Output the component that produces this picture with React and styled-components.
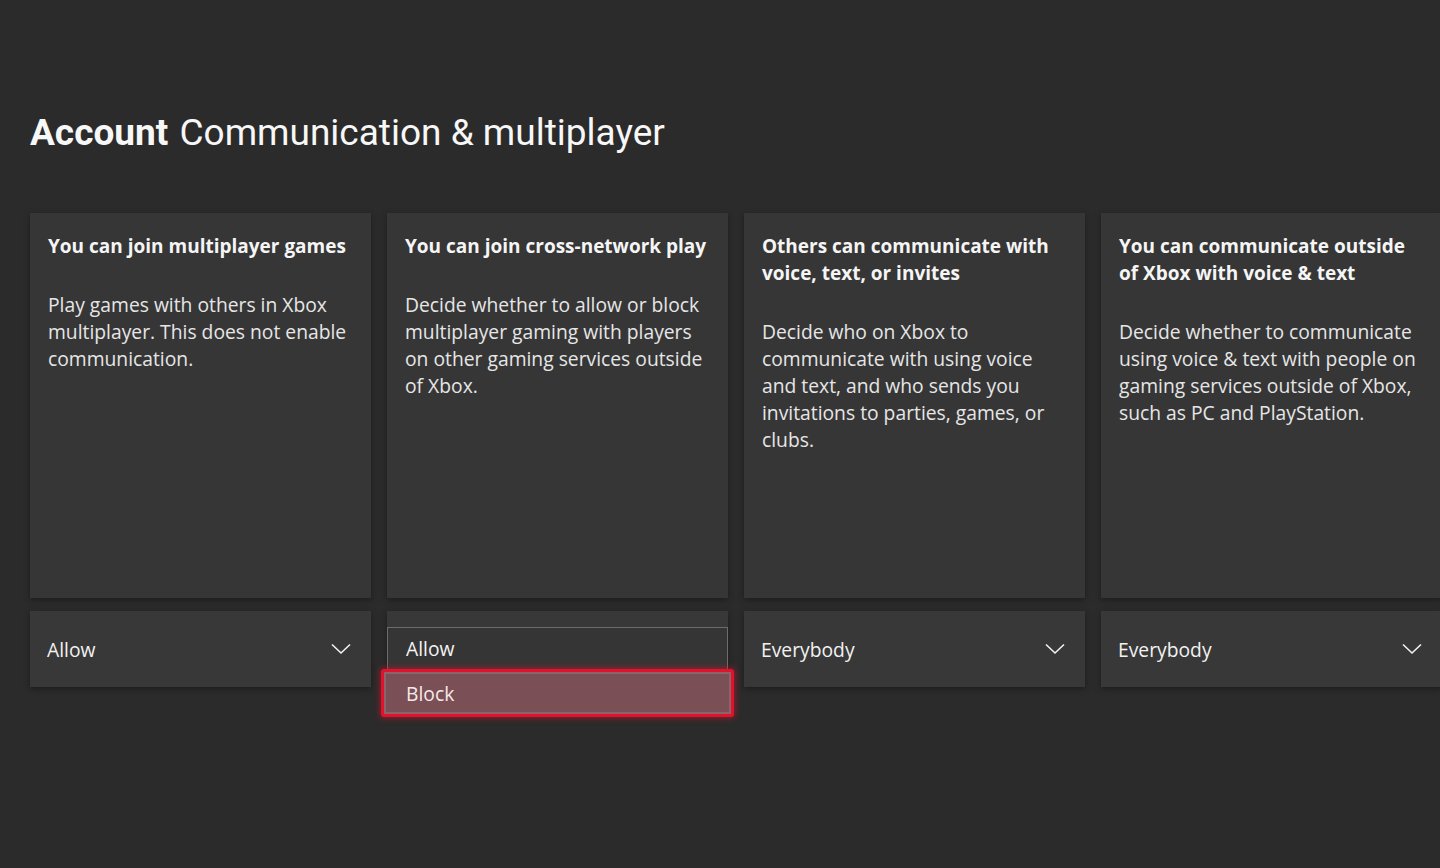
import React from 'react';
import styled, { createGlobalStyle } from 'styled-components';

const Global = createGlobalStyle`
  html, body {
    margin: 0;
    padding: 0;
    background: #2b2b2b;
    height: 100%;
  }
  body {
    font-family: "Open Sans", "Noto Sans", sans-serif;
    color: #f2f2f2;
    overflow: hidden;
  }
`;

const Page = styled.div`
  width: 1440px;
  height: 868px;
  overflow: hidden;
  background: #2b2b2b;
  padding: 108px 0 0 30px;
  box-sizing: border-box;
`;

const Title = styled.h1`
  margin: 0 0 55px;
  font-family: Roboto, "Liberation Sans", sans-serif;
  font-size: 37px;
  font-weight: 400;
  line-height: 50px;
  color: #f7f7f7;

  b {
    font-weight: 700;
    margin-right: 2px;
  }
`;

const Columns = styled.div`
  display: flex;
  gap: 16px;
  width: max-content;
`;

const Column = styled.div`
  width: 341px;
  display: flex;
  flex-direction: column;
  gap: 13px;
`;

const Card = styled.div`
  height: 385px;
  background: #363636;
  box-shadow: 0 2px 6px rgba(0, 0, 0, 0.35);
  padding: 20px 18px;
  box-sizing: border-box;
`;

const Heading = styled.h2`
  margin: 0 0 31px;
  font-size: 19px;
  font-weight: 700;
  line-height: 27px;
  color: #f5f5f5;
`;

const Body = styled.p`
  margin: 0;
  font-size: 19.3px;
  line-height: 27px;
  color: #e6e6e6;
`;

const SelectWrap = styled.div`
  position: relative;
  height: 76px;
`;

const Select = styled.div`
  height: 76px;
  background: #383838;
  box-shadow: 0 2px 6px rgba(0, 0, 0, 0.35);
  display: flex;
  align-items: center;
  justify-content: space-between;
  padding: 0 20px 0 17px;
  box-sizing: border-box;
  font-size: 19.3px;
  color: #f2f2f2;
`;

const Popup = styled.div`
  position: absolute;
  top: 16px;
  left: 0;
  right: 0;
  border: 1px solid #6c6c6c;
  background: #353535;
  z-index: 2;
`;

const Option = styled.div`
  position: relative;
  height: ${p => (p.$active ? '48px' : '41px')};
  display: flex;
  align-items: center;
  padding: 0 18px;
  font-size: 19.3px;
  color: #f4f4f4;
  box-sizing: border-box;
  ${p =>
    p.$active &&
    `
    margin: 0 -7px -12px;
    padding: 0 22px;
    background: #7a4f55;
    border: 3px solid #e3112c;
    border-radius: 3px;
    box-shadow: 0 0 6px 1px rgba(230, 20, 45, 0.55), inset 0 0 0 2px rgba(255,255,255,0.12);
    color: #f6e9ea;
  `}
`;

const Chevron = () => (
  <svg width="20" height="12" viewBox="0 0 20 12" fill="none">
    <path d="M1 1.5 L10 10 L19 1.5" stroke="#f2f2f2" strokeWidth="1.6" />
  </svg>
);

const settings = [
  {
    heading: 'You can join multiplayer games',
    body: 'Play games with others in Xbox multiplayer. This does not enable communication.',
    value: 'Allow'
  },
  {
    heading: 'You can join cross-network play',
    body: 'Decide whether to allow or block multiplayer gaming with players on other gaming services outside of Xbox.',
    value: 'Allow',
    open: ['Allow', 'Block'],
    active: 'Block'
  },
  {
    heading: 'Others can communicate with voice, text, or invites',
    body: 'Decide who on Xbox to communicate with using voice and text, and who sends you invitations to parties, games, or clubs.',
    value: 'Everybody'
  },
  {
    heading: 'You can communicate outside of Xbox with voice & text',
    body: 'Decide whether to communicate using voice & text with people on gaming services outside of Xbox, such as PC and PlayStation.',
    value: 'Everybody'
  }
];

export default function App() {
  return (
    <Page>
      <Global />
      <Title><b>Account</b> Communication &amp; multiplayer</Title>
      <Columns>
        {settings.map(s => (
          <Column key={s.heading}>
            <Card>
              <Heading>{s.heading}</Heading>
              <Body>{s.body}</Body>
            </Card>
            <SelectWrap>
              <Select>
                <span>{s.open ? '' : s.value}</span>
                {!s.open && <Chevron />}
              </Select>
              {s.open && (
                <Popup>
                  {s.open.map(o => (
                    <Option key={o} $active={o === s.active}>{o}</Option>
                  ))}
                </Popup>
              )}
            </SelectWrap>
          </Column>
        ))}
      </Columns>
    </Page>
  );
}
